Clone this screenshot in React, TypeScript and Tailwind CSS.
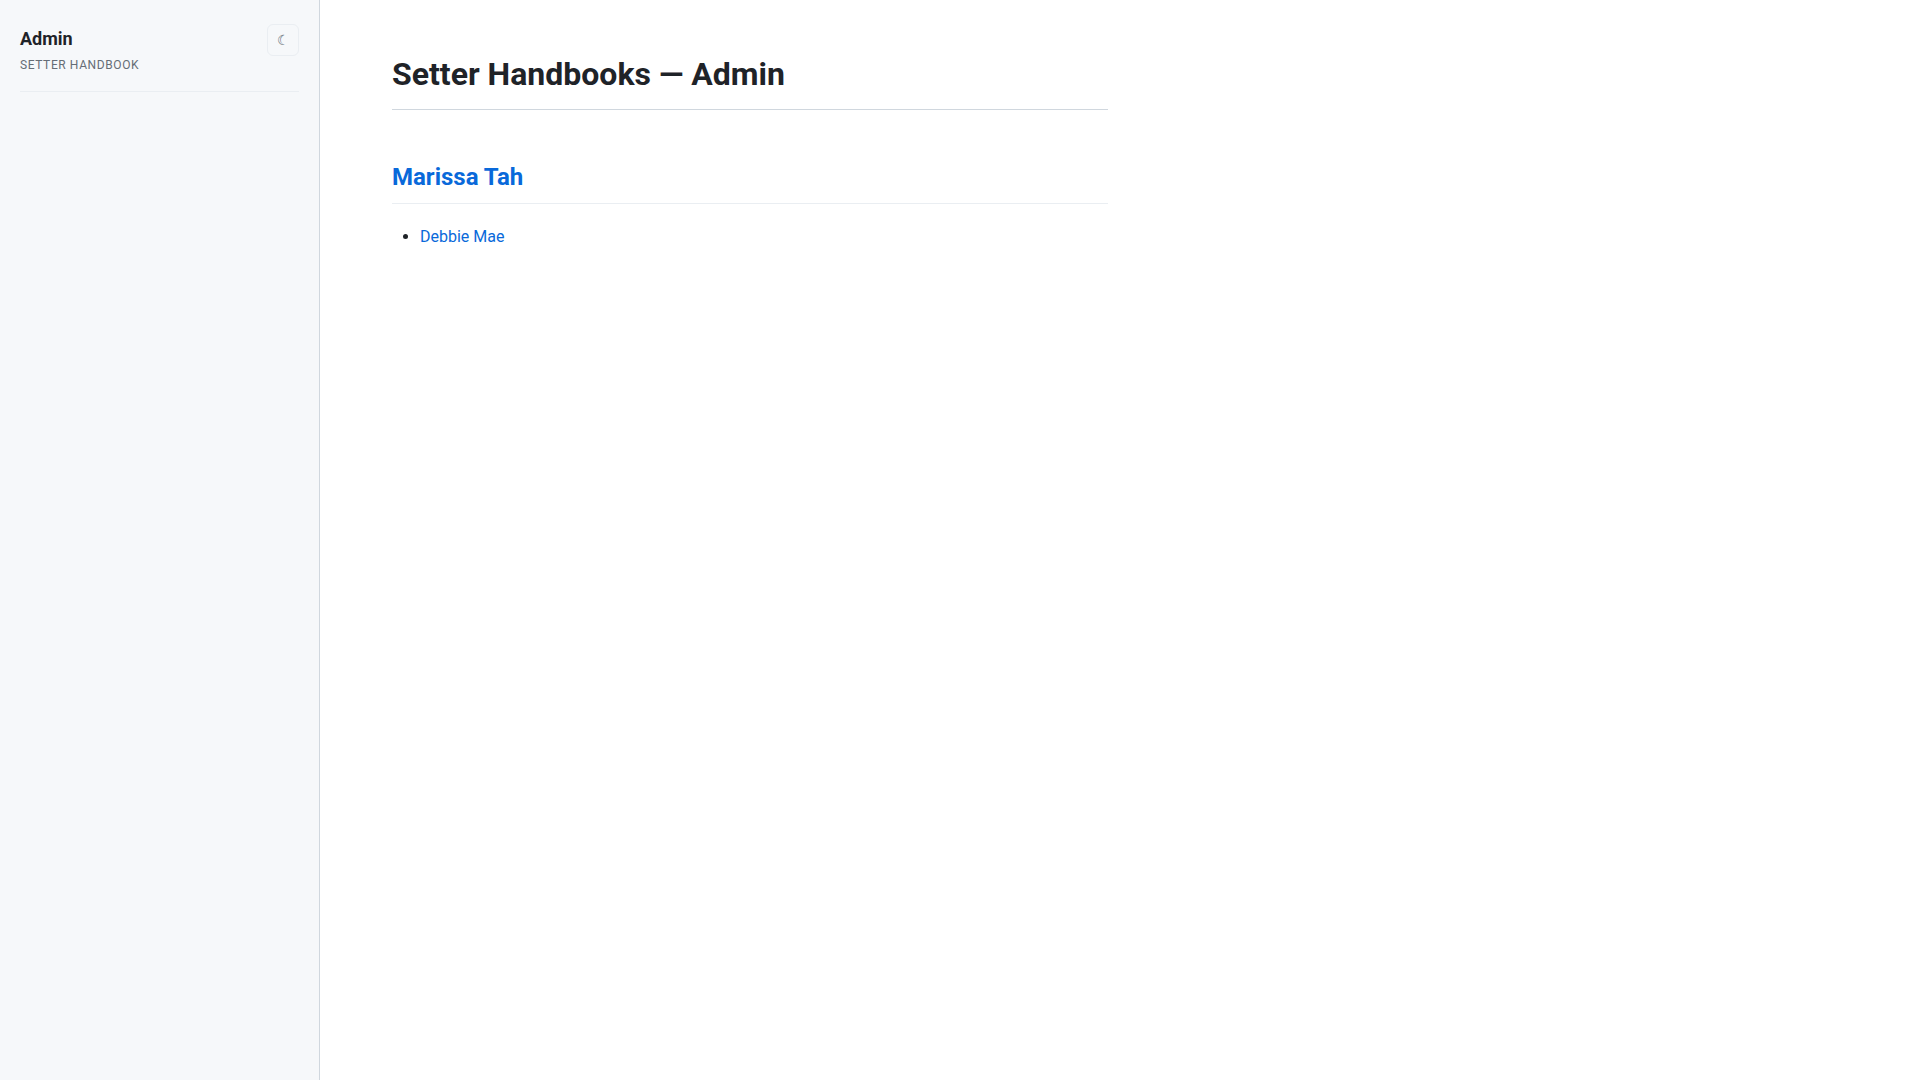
export default function App() {
  return (
    <div className="flex min-h-screen bg-white font-[Roboto,sans-serif] text-base leading-[26px] text-[#1f2328]">
      <aside className="w-80 shrink-0 border-r border-[#d0d7de] bg-[#f6f8fa] px-5 py-6">
        <header className="flex items-start justify-between border-b border-[#eaeef2] pb-4">
          <div>
            <p className="text-lg font-bold leading-[29px]">Admin</p>
            <p className="mt-0.5 text-xs uppercase leading-5 tracking-wider text-[#656d76]">Setter Handbook</p>
          </div>
          <button
            type="button"
            aria-label="Toggle dark mode"
            className="flex size-8 items-center justify-center rounded-md border border-[#eaeef2] text-sm text-[#656d76]"
          >
            ☾
          </button>
        </header>
      </aside>
      <main className="min-w-0 flex-1 px-18 py-12">
        <div className="max-w-[716px]">
          <h1 className="border-b border-[#d0d7de] pb-[9px] text-[32px] font-bold leading-[52px]">
            Setter Handbooks — Admin
          </h1>
          <h2 className="mt-12 border-b border-[#eaeef2] pb-[7px] text-2xl font-bold leading-[38px] text-[#0969da]">
            <a href="#marissa-tah">Marissa Tah</a>
          </h2>
          <ul className="mt-5 list-disc pl-7">
            <li>
              <a href="#debbie-mae" className="text-[#0969da]">Debbie Mae</a>
            </li>
          </ul>
        </div>
      </main>
    </div>
  );
}
